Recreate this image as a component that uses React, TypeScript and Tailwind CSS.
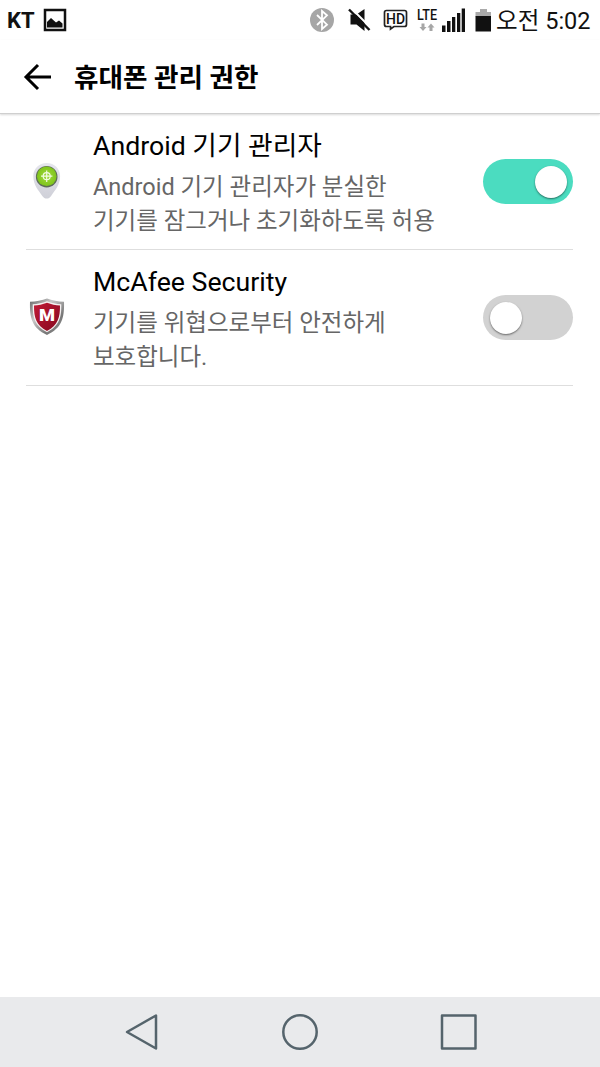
import { useState } from "react"

const ITEMS = [
  {
    id: "device-manager",
    title: "Android 기기 관리자",
    lines: ["Android 기기 관리자가 분실한", "기기를 잠그거나 초기화하도록 허용"],
    icon: <PinIcon />,
    enabled: true,
  },
  {
    id: "mcafee",
    title: "McAfee Security",
    lines: ["기기를 위협으로부터 안전하게", "보호합니다."],
    icon: <ShieldIcon />,
    enabled: false,
  },
]

function PinIcon() {
  return (
    <svg width="42" height="44" viewBox="0 0 42 44" className="block">
      <defs>
        <linearGradient id="pin" x1="0" y1="0" x2="0" y2="1">
          <stop offset="0" stopColor="#e6e6ee" />
          <stop offset="1" stopColor="#cfd0d8" />
        </linearGradient>
        <radialGradient id="dot">
          <stop offset="0" stopColor="#a2dc3c" />
          <stop offset="1" stopColor="#7fc41c" />
        </radialGradient>
      </defs>
      <path d="M20.7 3C13 3 7.3 8.7 7.3 16c0 9 5 14 9 20 2.2 3.4 6.600 3.400 8.800 0 4-6 9-11 9-20C34.1 8.700 28.400 3 20.700 3z" fill="url(#pin)" />
      <circle cx="20.700" cy="16.700" r="10.800" fill="#5d6b58" />
      <circle cx="20.700" cy="16.200" r="9.800" fill="url(#dot)" />
      <g stroke="#f2fbe2" strokeWidth="1.200" fill="none">
        <circle cx="20.700" cy="16.200" r="3.500" />
        <path d="M20.700 10.500v11.400M15 16.200h11.400" />
      </g>
    </svg>
  )
}

function ShieldIcon() {
  return (
    <svg width="42" height="44" viewBox="0 0 42 44" className="block">
      <defs>
        <linearGradient id="rim" x1="0" y1="0" x2="1" y2="1">
          <stop offset="0" stopColor="#666" />
          <stop offset="0.35" stopColor="#c8c8c8" />
          <stop offset="0.7" stopColor="#777" />
          <stop offset="1" stopColor="#999" />
        </linearGradient>
        <linearGradient id="red" x1="0" y1="0" x2="1" y2="1">
          <stop offset="0" stopColor="#c11a36" />
          <stop offset="1" stopColor="#85091f" />
        </linearGradient>
      </defs>
      <path d="M21 2.500c5 2 11 3 17 3.300C38.500 22 36 32 21 39 6 32 3.500 22 4 5.800c6-.3 12-1.300 17-3.300z" fill="url(#rim)" />
      <path d="M21 5.300c4.500 1.800 9.500 2.700 14.300 3C35.500 21.500 33.500 30 21 36.300 8.500 30 6.500 21.500 6.700 8.300c4.800-.3 9.800-1.200 14.300-3z" fill="#f5f0f0" />
      <path d="M21 6.700c4.200 1.700 8.700 2.500 13 2.800C34.100 21.300 32 29.300 21 35 10 29.300 7.900 21.300 8 9.500c4.300-.3 8.800-1.100 13-2.800z" fill="url(#red)" />
      <text x="21" y="24.500" textAnchor="middle" textLength="16" lengthAdjust="spacingAndGlyphs" fontSize="16" fontWeight="900" fill="#fff" fontFamily="Roboto, sans-serif">
        M
      </text>
    </svg>
  )
}

function StatusIcons() {
  return (
    <svg width="186" height="40" viewBox="308 0 186 40" className="block">
      {/* bluetooth */}
      <circle cx="322" cy="20" r="12" fill="#a6a6a6" />
      <path d="M317 15l10 9.700-5 4.300V11l5 4.300-10 9.700" fill="none" stroke="#fff" strokeWidth="1.800" />
      {/* muted speaker */}
      <path d="M350.500 14.500h6l8-5.500v22l-8-6.500h-6z" fill="#111" />
      <path d="M350.500 7.500l20.500 20.500" stroke="#fff" strokeWidth="2" />
      <path d="M349 9.500l20.500 20.500" stroke="#111" strokeWidth="2.400" />
      {/* hd call */}
      <path d="M386.500 10.500h18a2 2 0 0 1 2 2v12a2 2 0 0 1-2 2h-10.500l-3.500 2.500v-2.500h-4a2 2 0 0 1-2-2v-12a2 2 0 0 1 2-2z" fill="none" stroke="#222" strokeWidth="1.700" />
      <text x="386" y="24" textLength="19" lengthAdjust="spacingAndGlyphs" fontSize="15" fontWeight="500" fill="#111" fontFamily="Roboto, sans-serif">
        HD
      </text>
      {/* lte */}
      <text x="417" y="20" textLength="20" lengthAdjust="spacingAndGlyphs" fontSize="14" fontWeight="500" fill="#111" fontFamily="Roboto, sans-serif">
        LTE
      </text>
      <path d="M421.500 23.500h3v3.500h2l-3.500 4-3.500-4h2zM429.500 31h3v-3.500h2l-3.500-4-3.500 4h2z" fill="#a6a6a6" />
      {/* signal */}
      <path d="M442 25.500h3.500V32H442zM447 21h3.500v11H447zM452 17h3.300v15H452zM457 13h3.300v19H457zM461.700 8.500h3.300V32h-3.300z" fill="#111" />
      {/* battery */}
      <path d="M480 9h7v3h4v4.500h-15.500V12h4.500z" fill="#aaa" />
      <path d="M475.500 16h15.500v15.500h-15.500z" fill="#111" />
    </svg>
  )
}

function Toggle({ on, onChange }: { on: boolean; onChange: () => void }) {
  return (
    <button
      role="switch"
      aria-checked={on}
      onClick={onChange}
      className={`flex h-[45px] w-[90px] shrink-0 items-center rounded-full px-[6.5px] ${
        on ? "justify-end bg-[#4bdcc0]" : "justify-start bg-[#d2d2d2]"
      }`}
    >
      <span className="size-8 rounded-full bg-white shadow-[0_1px_2px_rgba(0,0,0,0.5)]" />
    </button>
  )
}

export default function App() {
  const [enabled, setEnabled] = useState(ITEMS.map((item) => item.enabled))

  const toggle = (index: number) => {
    setEnabled(enabled.map((value, i) => (i === index ? !value : value)))
  }

  return (
    <div className="flex h-screen w-full flex-col overflow-hidden bg-white font-[Roboto,'Noto_Sans_CJK_KR',sans-serif] text-black">
      <div className="flex h-10 shrink-0 items-center justify-between pr-[9.5px] pl-[7px]">
        <div className="flex items-center gap-2">
          <span className="pt-px text-[22px] leading-10 font-bold text-[#111]">KT</span>
          <svg width="24" height="24" viewBox="0 0 24 24">
            <path d="M2 2h20v20H2z" fill="none" stroke="#111" strokeWidth="2.500" />
            <path d="M4 19.500v-5.500l4-4 5 4.500 3-2 3.500 3v4z" fill="#111" />
          </svg>
        </div>
        <div className="flex h-10 items-center gap-[2.5px]">
          <StatusIcons />
          <span className="pt-[2px] text-[23.5px] leading-10 whitespace-nowrap text-[#111]">오전 5:02</span>
        </div>
      </div>

      <header className="flex h-[74px] shrink-0 items-center border-b border-[#cfcfcf] pl-[22px] shadow-[0_1px_2px_rgba(0,0,0,0.15)]">
        <svg width="30" height="28" viewBox="0 0 30 28" fill="none" stroke="#000" strokeWidth="3">
          <path d="M29 14H4M16 2L4 14l12 12" />
        </svg>
        <h1 className="ml-[22px] pt-[3px] text-[26.6px] font-bold">휴대폰 관리 권한</h1>
      </header>

      <main className="flex-1 pr-[27px] pl-[26px]">
        {ITEMS.map((item, i) => (
          <div key={item.id} className="flex h-[136px] items-center border-b border-[#dedede]">
            <div className="w-[67px] shrink-0">{item.icon}</div>
            <div className="flex-1 whitespace-nowrap">
              <h2 className="text-[26.7px] leading-[43px]">{item.title}</h2>
              <p className="pt-[2px] text-[23.5px] leading-[34.5px] text-[#666]">
                {item.lines[0]}
                <br />
                {item.lines[1]}
              </p>
            </div>
            <Toggle on={enabled[i]} onChange={() => toggle(i)} />
          </div>
        ))}
      </main>

      <nav className="flex h-[70px] shrink-0 items-center justify-between bg-[#e9eaec] px-[122px]">
        <svg width="40" height="40" viewBox="0 0 40 40" fill="none" stroke="#55646c" strokeWidth="2.500" strokeLinejoin="round">
          <path d="M34 3.500v33L5 20z" />
        </svg>
        <svg width="40" height="40" viewBox="0 0 40 40" fill="none" stroke="#55646c" strokeWidth="2.500">
          <circle cx="20" cy="20" r="16.700" />
        </svg>
        <svg width="40" height="40" viewBox="0 0 40 40" fill="none" stroke="#55646c" strokeWidth="2.500" strokeLinejoin="round">
          <path d="M4 3.500h33.500v33H4z" />
        </svg>
      </nav>
    </div>
  )
}
